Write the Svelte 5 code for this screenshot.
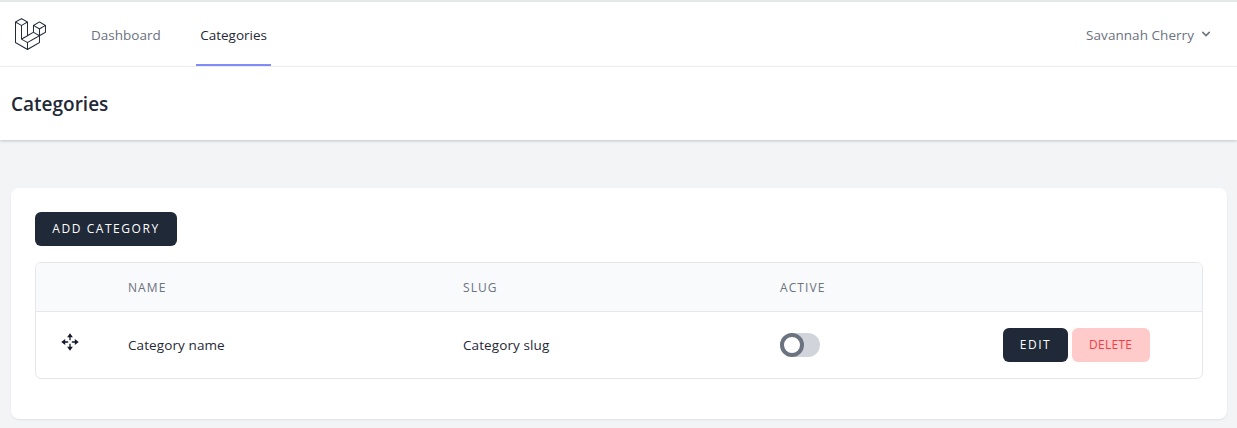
<script>
	const rows = [{ name: 'Category name', slug: 'Category slug' }];
</script>

<div class="page">
	<nav class="nav">
		<svg class="logo" viewBox="0 0 62 65" fill="currentColor" aria-hidden="true">
			<path d="M61.8548 14.6253C61.8778 14.7102 61.8895 14.7978 61.8897 14.8858V28.5615C61.8898 28.737 61.8434 28.9095 61.7554 29.0614C61.6675 29.2132 61.5409 29.3392 61.3887 29.4265L49.9104 36.0351V49.1337C49.9104 49.4902 49.7209 49.8192 49.4118 49.9987L25.4519 63.7916C25.3971 63.8227 25.3372 63.8427 25.2774 63.8639C25.255 63.8714 25.2338 63.8851 25.2101 63.8913C25.0426 63.9354 24.8666 63.9354 24.6991 63.8913C24.6716 63.8838 24.6467 63.8689 24.6205 63.8589C24.5657 63.8389 24.5084 63.8215 24.456 63.7916L0.501061 49.9987C0.348882 49.9113 0.222437 49.7853 0.134469 49.6334C0.0465019 49.4816 0.000120578 49.3092 0 49.1337L0 8.10652C0 8.01678 0.0124642 7.92953 0.0348998 7.84477C0.0423783 7.8161 0.0598282 7.78993 0.0697995 7.76126C0.0884958 7.70891 0.105946 7.65531 0.133367 7.6067C0.152063 7.5743 0.179485 7.54812 0.20192 7.51821C0.230588 7.47832 0.256763 7.43719 0.290416 7.40229C0.319084 7.37362 0.356476 7.35243 0.388883 7.32751C0.425029 7.29759 0.457436 7.26518 0.498568 7.2415L12.4779 0.345059C12.6296 0.257786 12.8015 0.211853 12.9765 0.211853C13.1515 0.211853 13.3234 0.257786 13.475 0.345059L25.4531 7.2415H25.4556C25.4955 7.26643 25.5292 7.29759 25.5653 7.32626C25.5977 7.35119 25.6339 7.37362 25.6625 7.40104C25.6974 7.43719 25.7224 7.47832 25.7523 7.51821C25.7735 7.54812 25.8021 7.5743 25.8196 7.6067C25.8483 7.65656 25.8645 7.70891 25.8844 7.76126C25.8944 7.78993 25.9118 7.8161 25.9193 7.84602C25.9423 7.93096 25.954 8.01853 25.9542 8.10652V33.7317L35.9355 27.9844V14.8846C35.9355 14.7973 35.948 14.7088 35.9704 14.6253C35.9792 14.5954 35.9954 14.5692 36.0053 14.5405C36.0253 14.4882 36.0427 14.4346 36.0702 14.386C36.0888 14.3536 36.1163 14.3274 36.1375 14.2975C36.1674 14.2576 36.1923 14.2165 36.2272 14.1816C36.2559 14.1529 36.292 14.1317 36.3244 14.1068C36.3618 14.0769 36.3942 14.0445 36.4341 14.0208L48.4147 7.12434C48.5663 7.03694 48.7383 6.99094 48.9133 6.99094C49.0883 6.99094 49.2602 7.03694 49.4118 7.12434L61.3899 14.0208C61.4323 14.0457 61.4647 14.0769 61.5021 14.1055C61.5333 14.1305 61.5694 14.1529 61.5981 14.1803C61.633 14.2165 61.6579 14.2576 61.6878 14.2975C61.7103 14.3274 61.7377 14.3536 61.7551 14.386C61.7838 14.4346 61.8 14.4882 61.8199 14.5405C61.8312 14.5692 61.8474 14.5954 61.8548 14.6253ZM59.893 27.9844V16.6121L55.7013 19.0252L49.9104 22.3593V33.7317L59.8942 27.9844H59.893ZM47.9149 48.5566V37.1768L42.2187 40.4299L25.953 49.7133V61.2003L47.9149 48.5566ZM1.99677 9.83281V48.5566L23.9562 61.199V49.7145L12.4841 43.2219L12.4804 43.2194L12.4754 43.2169C12.4368 43.1945 12.4044 43.1621 12.3682 43.1347C12.3371 43.1097 12.3009 43.0898 12.2735 43.0624L12.271 43.0586C12.2386 43.0275 12.2162 42.9888 12.1887 42.9539C12.1638 42.9203 12.1339 42.8916 12.114 42.8567L12.1127 42.853C12.0903 42.8156 12.0766 42.7707 12.0604 42.7283C12.0442 42.6909 12.023 42.656 12.013 42.6161C12.0005 42.5688 11.998 42.5177 11.9931 42.4691C11.9881 42.4317 11.9781 42.3943 11.9781 42.3569V15.5801L6.18848 12.2446L1.99677 9.83281ZM12.9777 2.36177L2.99764 8.10652L12.9752 13.8513L22.9541 8.10527L12.9752 2.36177H12.9777ZM18.1678 38.2138L23.9574 34.8809V9.83281L19.7657 12.2459L13.9749 15.5801V40.6281L18.1678 38.2138ZM48.9133 9.14105L38.9344 14.8858L48.9133 20.6305L58.8909 14.8846L48.9133 9.14105ZM47.9149 22.3593L42.124 19.0252L37.9323 16.6121V27.9844L43.7219 31.3174L47.9149 33.7317V22.3593ZM24.9533 47.987L39.59 39.631L46.9065 35.4555L36.9352 29.7145L25.4544 36.3242L14.9907 42.3482L24.9533 47.987Z" />
		</svg>
		<div class="links">
			<a href="#dashboard" class="link">Dashboard</a>
			<a href="#categories" class="link current">Categories</a>
		</div>
		<button class="user">
			Savannah Cherry
			<svg viewBox="0 0 20 20" fill="currentColor" aria-hidden="true">
				<path d="M5.293 7.293a1 1 0 011.414 0L10 10.586l3.293-3.293a1 1 0 111.414 1.414l-4 4a1 1 0 01-1.414 0l-4-4a1 1 0 010-1.414z" />
			</svg>
		</button>
	</nav>

	<header class="title">
		<h2>Categories</h2>
	</header>

	<main class="content">
		<section class="card">
			<button class="btn add">Add category</button>
			<div class="table-wrap">
				<table>
					<colgroup>
						<col class="c-drag" />
						<col class="c-name" />
						<col class="c-slug" />
						<col class="c-active" />
						<col />
					</colgroup>
					<thead>
						<tr>
							<th></th>
							<th>Name</th>
							<th>Slug</th>
							<th>Active</th>
							<th></th>
						</tr>
					</thead>
					<tbody>
						{#each rows as row}
							<tr>
								<td class="drag">
									<svg viewBox="0 0 18 18" aria-hidden="true">
										<path class="shaft" d="M9 3.5V7.2M9 10.8v3.7M3.5 9h3.7M10.8 9h3.7" />
										<path d="M9 .3 11.9 4.2H6.1zM9 17.7 6.1 13.8h5.8zM.3 9 4.2 6.1v5.8zM17.7 9 13.8 11.9V6.1z" />
									</svg>
								</td>
								<td>{row.name}</td>
								<td>{row.slug}</td>
								<td><span class="toggle"><span class="knob"></span></span></td>
								<td class="actions">
									<button class="btn edit">Edit</button>
									<button class="btn delete">Delete</button>
								</td>
							</tr>
						{/each}
					</tbody>
				</table>
			</div>
		</section>
	</main>
</div>

<style>
	:global(body) {
		background: #f3f4f6;
		font-family: 'Open Sans', 'Noto Sans', sans-serif;
	}
	.page {
		min-height: 428px;
		background: #f3f4f6;
		color: #1f2937;
		font-size: 13.5px;
		letter-spacing: 0.1px;
		overflow: hidden;
	}
	.nav {
		display: flex;
		align-items: stretch;
		height: 64px;
		padding: 0 23px 0 15px;
		background: #fff;
		border-top: 2px solid #e5e7eb;
		border-bottom: 1px solid #f3f4f6;
	}
	.logo {
		align-self: center;
		width: 31px;
		height: 32.5px;
		margin-top: 1px;
		flex: none;
		color: #1f2937;
	}
	.links {
		display: flex;
		gap: 31.5px;
		margin-left: 41px;
		letter-spacing: 0;
	}
	.link {
		display: flex;
		align-items: center;
		padding: 4px 4px 0;
		border-bottom: 2px solid transparent;
		color: #6b7280;
		text-decoration: none;
	}
	.current {
		border-bottom-color: #818cf8;
		color: #1f2937;
	}
	.user {
		display: flex;
		align-items: center;
		gap: 4px;
		margin-left: auto;
		padding: 1px 0 0;
		border: 0;
		background: none;
		color: #6b7280;
		font: inherit;
		letter-spacing: 0.05px;
	}
	.user svg {
		width: 16px;
		height: 16px;
		margin-top: -1px;
	}
	.title {
		position: relative;
		padding: 23px 11px 22px;
		background: #fff;
		box-shadow: 0 1px 3px rgba(0, 0, 0, 0.2);
	}
	h2 {
		margin: 0;
		font-size: 19px;
		font-weight: 600;
		line-height: 28px;
		letter-spacing: 0;
	}
	.content {
		padding: 48px 10px 0 11px;
	}
	.card {
		padding: 24px 24px 40px;
		background: #fff;
		border-radius: 8px;
		box-shadow: 0 1px 2px rgba(0, 0, 0, 0.08);
	}
	.btn {
		height: 34px;
		padding: 0 0 2px;
		border: 0;
		border-radius: 6px;
		background: #1f2937;
		color: #fff;
		font: inherit;
		font-size: 12px;
		letter-spacing: 0.13em;
		text-transform: uppercase;
	}
	.add {
		display: block;
		width: 142px;
	}
	.table-wrap {
		margin-top: 16px;
		border: 1px solid #e5e7eb;
		border-radius: 6px;
		overflow: hidden;
	}
	table {
		width: 100%;
		border-collapse: collapse;
		table-layout: fixed;
	}
	.c-drag {
		width: 68px;
	}
	.c-name {
		width: 335px;
	}
	.c-slug {
		width: 317px;
	}
	.c-active {
		width: 223px;
	}
	th {
		height: 48px;
		padding: 0 24px;
		background: #f9fafb;
		border-bottom: 1px solid #e5e7eb;
		color: #6b7280;
		font-size: 12px;
		font-weight: 400;
		letter-spacing: 0.09em;
		text-align: left;
		text-transform: uppercase;
	}
	td {
		height: 66px;
		padding: 0 24px;
		color: #1f2937;
	}
	.drag svg {
		display: block;
		width: 18px;
		height: 18px;
		margin: -6px 0 0 1px;
		fill: #111827;
	}
	.shaft {
		fill: none;
		stroke: #111827;
		stroke-width: 1.3;
	}
	.toggle {
		display: block;
		width: 40px;
		height: 24px;
		border-radius: 12px;
		background: #d1d5db;
	}
	.knob {
		display: block;
		box-sizing: border-box;
		width: 24px;
		height: 24px;
		border: 4px solid #6b7280;
		border-radius: 50%;
		background: #fff;
	}
	.actions {
		white-space: nowrap;
	}
	.edit {
		width: 65px;
	}
	.delete {
		width: 78px;
		background: #fecaca;
		color: #f43f46;
		letter-spacing: 0.025em;
	}
</style>
